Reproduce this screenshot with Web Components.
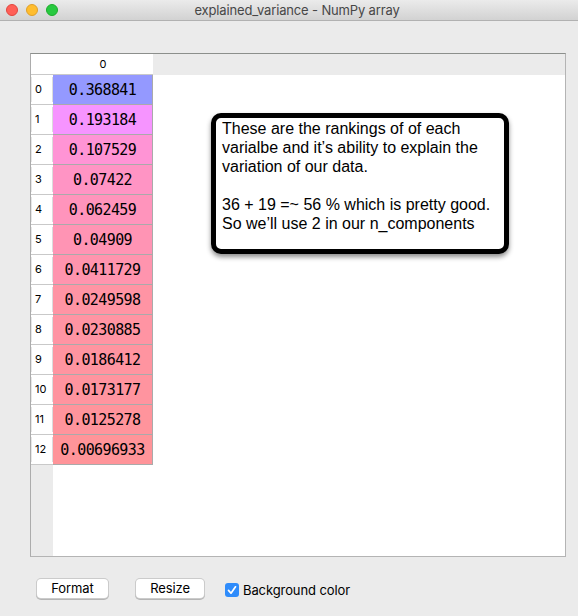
<!DOCTYPE html>
<html lang="en">
<head>
<meta charset="utf-8">
<title>explained_variance - NumPy array</title>
<style>
html,body{margin:0;height:100%;overflow:hidden;background:#ebebeb}
body{font-family:Inter,"Liberation Sans",sans-serif;color:#000}
</style>
</head>
<body>
<array-window heading="explained_variance - NumPy array">
  <array-grid values="0.368841 0.193184 0.107529 0.07422 0.062459 0.04909 0.0411729 0.0249598 0.0230885 0.0186412 0.0173177 0.0125278 0.00696933"
    colors="#9499ff #f694ff #ff94d5 #ff94c4 #ff94bc #ff94b4 #ff94ae #ff94a4 #ff94a3 #ff94a0 #ff949f #ff949c #ff9499">
    <sticky-note><note-line>These are the rankings of of each</note-line><note-line>varialbe and it’s ability to explain the</note-line><note-line>variation of our data.</note-line><note-line></note-line><note-line>36 + 19 =~ 56 % which is pretty good.</note-line><note-line>So we’ll use 2 in our n_components</note-line></sticky-note>
  </array-grid>
  <push-button slot="footer" style="width:71px">Format</push-button>
  <push-button slot="footer" style="width:68px;margin-left:27px">Resize</push-button>
  <check-option slot="footer">Background color</check-option>
</array-window>
<script>
function define(name, html, setup) {
  customElements.define(name, class extends HTMLElement {
    constructor() {
      super();
      this.attachShadow({mode: 'open'}).innerHTML = html;
    }
    connectedCallback() { if (setup) setup(this, this.shadowRoot); }
  });
}

define('note-line', `<style>:host{display:block;height:19px;white-space:nowrap}</style><slot></slot>`);

define('sticky-note', `<style>
:host{display:block;box-sizing:border-box;width:298px;height:141px;border:5px solid #000;border-radius:10px;
 background:#fff;padding:1px 6px;font:16px/19px "Liberation Sans",sans-serif;box-shadow:0 3px 5px rgba(0,0,0,.45)}
</style><slot></slot>`);

define('push-button', `<style>
:host{display:block;box-sizing:border-box;height:19px;margin:1px 1px 0;background:#fff;border-radius:4px;
 box-shadow:0 0 0 1px #cbcbcb,0 1px 0 1px #b5b5b5;font-size:13px;line-height:19px;letter-spacing:-.1px;text-align:center}
</style><slot></slot>`);

define('check-option', `<style>
:host{display:flex;align-items:center;gap:4px;height:20px;margin:2px 0 0 20px;font-size:13px;letter-spacing:-.1px;white-space:nowrap}
svg{display:block;flex:none}
</style><svg width="14" height="14" viewBox="0 0 14 14"><rect width="14" height="14" rx="3" fill="#2f8cfb"/><path d="M3.5 7.4 6 10.2 10.5 3.8" fill="none" stroke="#fff" stroke-width="1.7" stroke-linecap="round" stroke-linejoin="round"/></svg><span><slot></slot></span>`);

define('array-row', `<style>
:host{display:grid;grid-template:30px / 22px 100px}
.index{box-sizing:border-box;padding-left:4px;font-size:11px;line-height:29px;
 background:linear-gradient(#dcdcdc,#dcdcdc) 21px 2px/1px 25px no-repeat,linear-gradient(#e6e6e6,#e6e6e6) 0 2px/1px 25px no-repeat,#fff;border-bottom:1px solid #c9c9c9}
.value{box-sizing:border-box;border:solid #aaa;border-width:0 1px 1px 0;text-align:center;font:15px/30px "DejaVu Sans Mono",monospace;letter-spacing:-.6px}
</style><div class="index"></div><div class="value"><slot></slot></div>`, (el, root) => {
  root.querySelector('.index').textContent = el.getAttribute('index');
  root.querySelector('.value').style.background = el.getAttribute('color');
});

define('array-grid', `<style>
:host{display:block;position:relative;box-sizing:border-box;width:536px;height:504px;margin:32px 0 0 30px;
 border:1px solid #b4b4b4;border-top-color:#8c8f8c;border-left-color:#acacac;background:#fff}
.head{display:flex;height:21px;background:#ebebeb}
.column{box-sizing:border-box;width:122px;height:21px;background:#fff;border-bottom:1px solid #c9c9c9;padding-left:22px;text-align:center;font-size:11px;line-height:21px}
.body{height:481px;background:linear-gradient(90deg,#ebebeb 22px,#fff 22px)}
.overlay{position:absolute;left:180px;top:59px}
</style><div class="head"><div class="column">0</div></div><div class="body"></div><div class="overlay"><slot></slot></div>`, (el, root) => {
  const colors = el.getAttribute('colors').split(' ');
  const body = root.querySelector('.body');
  el.getAttribute('values').split(' ').forEach((value, i) => {
    const row = document.createElement('array-row');
    row.setAttribute('index', i);
    row.setAttribute('color', colors[i]);
    row.textContent = value;
    body.append(row);
  });
});

define('title-bar', `<style>
:host{display:grid;grid-template-columns:1fr auto 1fr;box-sizing:border-box;height:21px;border-bottom:1px solid #b1b1b1;
 background:linear-gradient(#ebebeb,#d2d2d2);color:#474747;font-size:13px;line-height:20px;align-items:center}
.lights{display:flex;gap:8px;padding-left:6px}
i{box-sizing:border-box;width:12px;height:12px;border-radius:50%;border:1px solid #e2463f;background:#ff5f57}
i:nth-child(2){background:#ffbd2e;border-color:#e0a028}
i:nth-child(3){background:#28c940;border-color:#1dad2b}
.title{margin-left:16px;letter-spacing:-.15px}
</style><div class="lights"><i></i><i></i><i></i></div><div class="title"><slot></slot></div>`);

define('array-window', `<style>
:host{display:block;width:578px;height:616px;background:#ebebeb}
.footer{display:flex;margin:21px 0 0 36px}
</style><title-bar></title-bar><slot></slot><div class="footer"><slot name="footer"></slot></div>`, (el, root) => {
  root.querySelector('title-bar').textContent = el.getAttribute('heading');
});
</script>
</body>
</html>
